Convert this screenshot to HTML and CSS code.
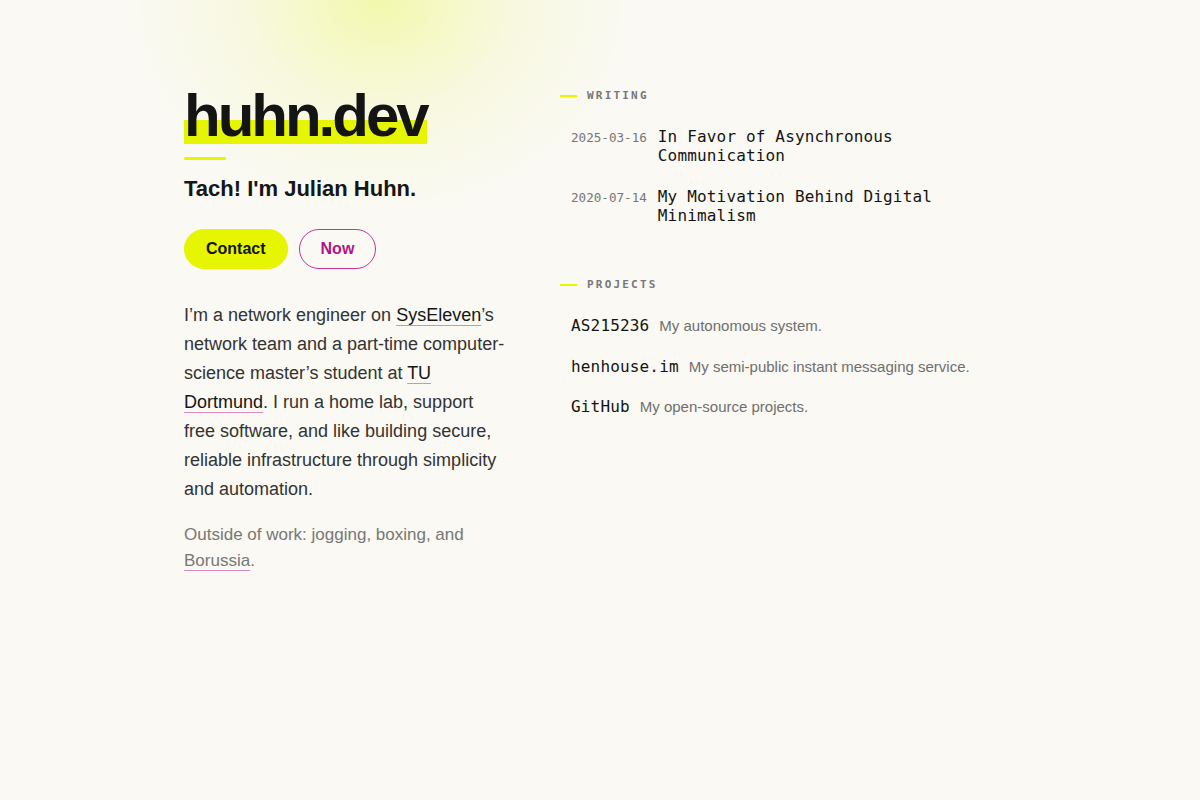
FILE: index.html
```html
<!DOCTYPE html>
<html lang="en">
<head>
<meta charset="utf-8">
<title>huhn.dev</title>
<link rel="stylesheet" href="styles.css">
</head>
<body>
<div class="glow"></div>
<main class="page">
  <section class="intro">
    <h1 class="title">huhn.dev</h1>
    <div class="bar"></div>
    <p class="tagline">Tach! I'm Julian Huhn.</p>
    <div class="buttons">
      <a class="btn btn-primary" href="#">Contact</a>
      <a class="btn btn-outline" href="#">Now</a>
    </div>
    <p class="bio">I’m a network engineer on <a href="#">SysEleven</a>’s network team and a part-time computer-science master’s student at <a href="#">TU Dortmund</a>. I run a home lab, support free software, and like building secure, reliable infrastructure through simplicity and automation.</p>
    <p class="aside">Outside of work: jogging, boxing, and <a href="#">Borussia</a>.</p>
  </section>
  <section class="side">
    <h2 class="label"><span class="dash"></span>Writing</h2>
    <ul class="posts">
      <li class="post"><span class="date">2025-03-16</span><a class="post-title" href="#">In Favor of Asynchronous Communication</a></li>
      <li class="post"><span class="date">2020-07-14</span><a class="post-title" href="#">My Motivation Behind Digital Minimalism</a></li>
    </ul>
    <h2 class="label label-projects"><span class="dash"></span>Projects</h2>
    <ul class="projects">
      <li class="project"><a class="proj-name" href="#">AS215236</a><span class="proj-desc">My autonomous system.</span></li>
      <li class="project"><a class="proj-name" href="#">henhouse.im</a><span class="proj-desc">My semi-public instant messaging service.</span></li>
      <li class="project"><a class="proj-name" href="#">GitHub</a><span class="proj-desc">My open-source projects.</span></li>
    </ul>
  </section>
</main>
</body>
</html>
```
FILE: styles.css
```css
* { box-sizing: border-box; }
html, body { margin: 0; padding: 0; }
body {
  background: #faf9f3;
  color: #222;
  font-family: "Liberation Sans", Arial, sans-serif;
  min-height: 800px;
  position: relative;
  overflow: hidden;
}
.glow {
  position: absolute;
  left: 130px;
  top: -210px;
  width: 500px;
  height: 420px;
  border-radius: 50%;
  background: radial-gradient(closest-side, rgba(240, 248, 150, 0.75), rgba(244, 248, 190, 0.35) 55%, rgba(250, 249, 243, 0) 100%);
  pointer-events: none;
}
.page {
  position: relative;
  width: 832px;
  margin: 0 auto;
  padding-top: 86px;
  display: grid;
  grid-template-columns: 324px 1fr;
  column-gap: 52px;
}
.intro { min-width: 0; }
.title {
  display: inline-block;
  margin: 0;
  font-size: 60px;
  line-height: 60px;
  height: 60px;
  font-weight: 700;
  letter-spacing: -0.05em;
  color: #141414;
  background: linear-gradient(to bottom, transparent 0, transparent 34px, #e6f500 34px, #e6f500 58px, transparent 58px);
}
.bar {
  width: 42px;
  height: 3px;
  background: #e6f500;
  margin-top: 11px;
  border-radius: 2px;
}
.tagline {
  margin: 15px 0 0;
  font-size: 22px;
  line-height: 28px;
  font-weight: 700;
  color: #161616;
}
.buttons {
  display: flex;
  gap: 11px;
  margin-top: 26px;
}
.btn {
  display: inline-flex;
  align-items: center;
  height: 40px;
  padding: 0 21px;
  border: 1px solid transparent;
  border-radius: 999px;
  font-size: 16px;
  font-weight: 700;
  text-decoration: none;
}
.btn-primary { background: #e6f500; color: #141414; border-color: #e6f500; }
.btn-outline { color: #b0148a; border-color: #c2359c; }
.bio {
  margin: 32px 0 0;
  font-size: 18px;
  line-height: 29px;
  color: #333;
}
.bio a, .aside a {
  color: #151515;
  text-decoration: underline;
  text-decoration-color: #d88cc4;
  text-decoration-thickness: 1px;
  text-underline-offset: 4px;
}
.aside {
  margin: 18px 0 0;
  font-size: 17px;
  line-height: 26px;
  color: #777;
}
.aside a { color: #777; }
.side { padding-top: 3px; }
.label {
  display: flex;
  align-items: center;
  margin: 0;
  font-family: "DejaVu Sans Mono", monospace;
  font-size: 11px;
  line-height: 14px;
  font-weight: 700;
  letter-spacing: 0.2em;
  text-transform: uppercase;
  color: #777;
}
.dash {
  width: 17px;
  height: 2px;
  background: #e6f500;
  margin-right: 10px;
}
.label-projects { margin-top: 53px; }
ul { list-style: none; margin: 0; padding: 0; }
.posts {
  margin-top: 25px;
  padding-left: 11px;
  display: flex;
  flex-direction: column;
  gap: 23px;
}
.post {
  display: flex;
  align-items: baseline;
  gap: 11px;
}
.date {
  flex: none;
  font-family: "DejaVu Sans Mono", monospace;
  font-size: 12.6px;
  color: #777;
}
.post-title {
  font-family: "DejaVu Sans Mono", monospace;
  font-size: 16px;
  line-height: 18.5px;
  letter-spacing: 0.01em;
  color: #141414;
  text-decoration: none;
}
.projects {
  margin-top: 24px;
  padding-left: 11px;
  display: flex;
  flex-direction: column;
  gap: 20.5px;
}
.project {
  display: flex;
  align-items: baseline;
  gap: 10px;
  line-height: 20px;
}
.proj-name {
  font-family: "DejaVu Sans Mono", monospace;
  font-size: 16px;
  letter-spacing: 0.01em;
  color: #141414;
  text-decoration: none;
}
.proj-desc {
  font-size: 15px;
  color: #6f6f6f;
}
```
